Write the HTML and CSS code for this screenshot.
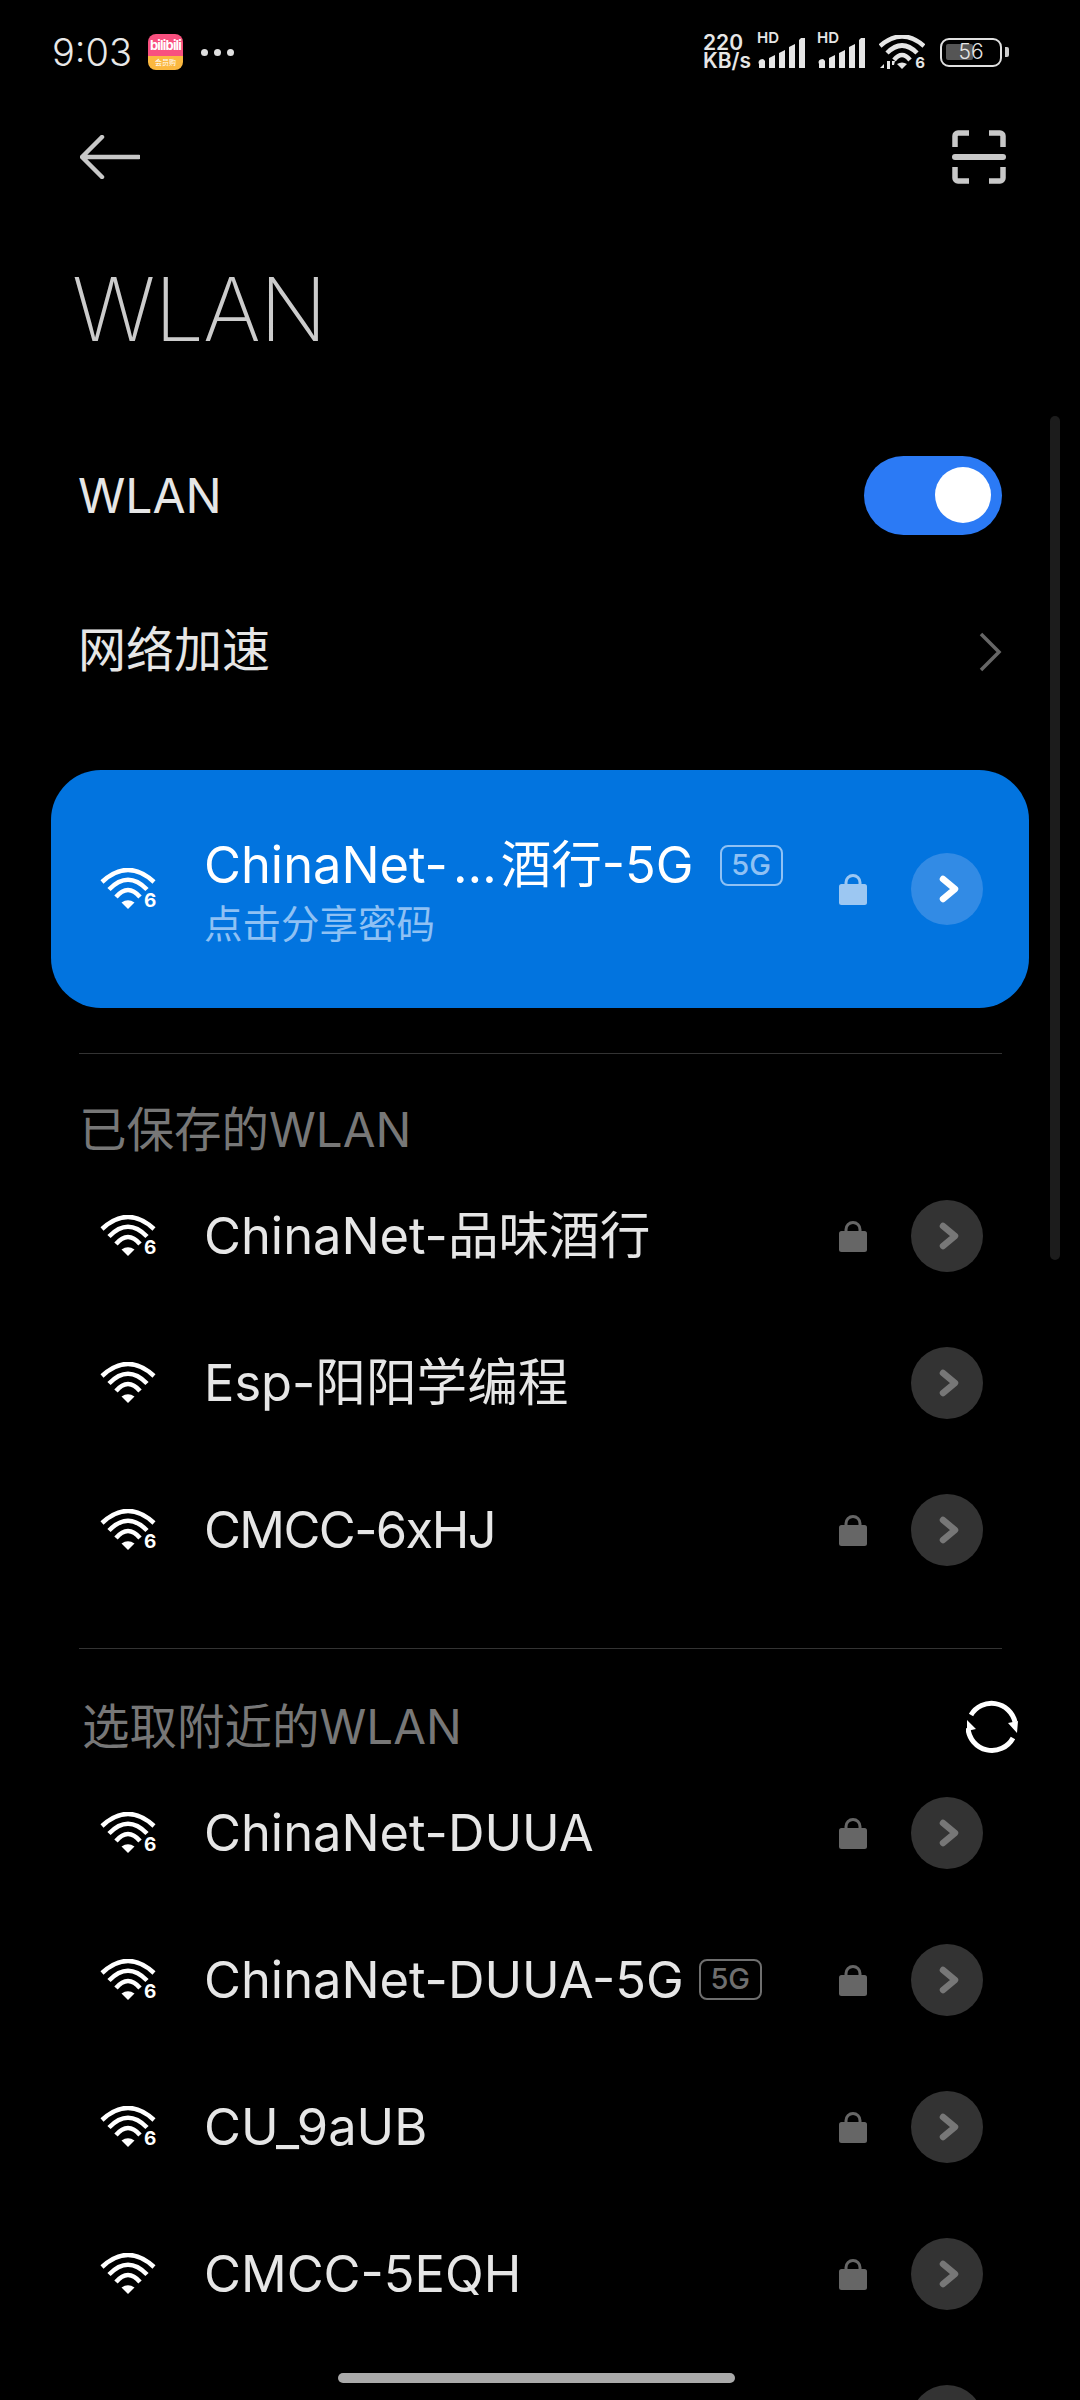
FILE: index.html
```html
<!DOCTYPE html>
<html lang="zh-CN">
<head>
    <meta charset="UTF-8">
    <meta name="viewport" content="width=device-width, initial-scale=1.0">
    <title>WLAN</title>
    <link rel="stylesheet" href="styles.css">
</head>
<body>
    <svg class="defs" width="0" height="0">
        <symbol id="wifi" viewBox="0 0 56 42">
            <path d="M2 14Q28 -10 54 14M9 21.500Q28 2 47 21.500M16 29Q28 15 40 29" fill="none" stroke="currentColor" stroke-width="4.500"/>
            <path d="M21.500 34.500Q28 30 34.500 34.500L28 41Z" fill="currentColor"/>
        </symbol>
        <symbol id="lock" viewBox="0 0 28 32">
            <path d="M7 13V9.500a7 7 0 0 1 14 0V13" fill="none" stroke="currentColor" stroke-width="3"/>
            <rect x="0" y="11" width="28" height="21" rx="2.500" fill="currentColor"/>
        </symbol>
        <symbol id="chev" viewBox="0 0 24 30">
            <path d="M6 5L18 15L6 25" fill="none" stroke="currentColor" stroke-width="6.500" stroke-linecap="round" stroke-linejoin="round"/>
        </symbol>
        <symbol id="signal" viewBox="0 0 50 36">
            <path d="M2 36v-4a3 3 0 0 1 6 -3v7zM12 36v-10l6 -3v13zM22 36v-15l6 -3v18zM32 36v-21l6 -3v24zM42 36v-28l2 -2h4v30z" fill="currentColor"/>
        </symbol>
    </svg>

    <div class="screen">
        <!-- 状态栏 -->
        <div class="status">
            <span class="time">9:03</span>
            <span class="appicon"><span class="apptop">bilibili</span><span class="appbottom">会员购</span></span>
            <span class="dots"><i></i><i></i><i></i></span>
            <span class="status-right">
                <span class="speed">220<br>KB/s</span>
                <span class="sig"><span class="hd">HD</span><svg class="bars"><use href="#signal"/></svg></span>
                <span class="sig sig-2"><span class="hd">HD</span><svg class="bars"><use href="#signal"/></svg></span>
                <span class="swifi">
                    <svg class="swifi-img" viewBox="0 0 46 35">
                        <path d="M1 11Q23 -8 45 11M8 18Q23 3 38 18M15 25Q23 15 31 25" fill="none" stroke="currentColor" stroke-width="4.500"/>
                        <path d="M18 29Q23 26 28 29L23 34Z" fill="currentColor"/>
                        <path d="M5 29l-4 4h4zM8 26h3v8h-3zM13 26h3l-1 4h-2z" fill="currentColor"/>
                    </svg>
                    <span class="six-s">6</span>
                </span>
                <span class="battery"><span class="batfill"></span><span class="batnum">56</span></span>
                <span class="battip"></span>
            </span>
        </div>

        <div class="topbar">
            <svg class="back" viewBox="0 0 60 44">
                <path d="M59 22H3M22 2L2 22L22 42" fill="none" stroke="currentColor" stroke-width="4.500" stroke-linecap="round" stroke-linejoin="round"/>
            </svg>
            <svg class="scan" viewBox="0 0 54 54">
                <path d="M17 3H6a3 3 0 0 0 -3 3V17M37 3H48a3 3 0 0 1 3 3V17M17 51H6a3 3 0 0 1 -3 -3V37M37 51H48a3 3 0 0 0 3 -3V37" fill="none" stroke="currentColor" stroke-width="5.500"/>
                <path d="M3 27H51" fill="none" stroke="currentColor" stroke-width="6" stroke-linecap="round"/>
            </svg>
        </div>

        <h1 class="title">WLAN</h1>

        <div class="setrow">
            <span>WLAN</span>
            <span class="toggle"><span class="knob"></span></span>
        </div>
        <div class="setrow setrow-2">
            <span class="cjk-up">网络加速</span>
            <svg class="more" viewBox="0 0 24 40">
                <path d="M3 2L21 20L3 38" fill="none" stroke="currentColor" stroke-width="3.500"/>
            </svg>
        </div>

        <!-- 当前连接 -->
        <div class="card">
            <span class="wifi"><svg class="wifi-img"><use href="#wifi"/></svg><span class="six">6</span></span>
            <div class="info">
                <div class="nameline"><span class="name">ChinaNet-<span class="ell">…</span>酒行-5G</span><span class="badge">5G</span></div>
                <div class="sub">点击分享密码</div>
            </div>
            <svg class="lock"><use href="#lock"/></svg>
            <span class="go"><svg class="chev"><use href="#chev"/></svg></span>
        </div>

        <div class="line"></div>
        <div class="sect">已保存的WLAN</div>
        <div class="row">
            <span class="wifi"><svg class="wifi-img"><use href="#wifi"/></svg><span class="six">6</span></span>
            <span class="name">ChinaNet-品味酒行</span>
            <svg class="lock"><use href="#lock"/></svg>
            <span class="go"><svg class="chev"><use href="#chev"/></svg></span>
        </div>
        <div class="row">
            <span class="wifi"><svg class="wifi-img"><use href="#wifi"/></svg></span>
            <span class="name">Esp-阳阳学编程</span>
            <span class="go"><svg class="chev"><use href="#chev"/></svg></span>
        </div>
        <div class="row">
            <span class="wifi"><svg class="wifi-img"><use href="#wifi"/></svg><span class="six">6</span></span>
            <span class="name name-tight">CMCC-6xHJ</span>
            <svg class="lock"><use href="#lock"/></svg>
            <span class="go"><svg class="chev"><use href="#chev"/></svg></span>
        </div>

        <div class="line"></div>
        <div class="sect sect-2">
            <span>选取附近的WLAN</span>
            <svg class="refresh" viewBox="0 0 54 54">
                <path d="M5 15A24 24 0 0 1 49 22M47 38A24 24 0 0 1 2 28" fill="none" stroke="currentColor" stroke-width="5"/>
                <path d="M1 20L10 29L1 31ZM42 23L52 21L51 33Z" fill="currentColor"/>
            </svg>
        </div>
        <div class="row">
            <span class="wifi"><svg class="wifi-img"><use href="#wifi"/></svg><span class="six">6</span></span>
            <span class="name">ChinaNet-DUUA</span>
            <svg class="lock"><use href="#lock"/></svg>
            <span class="go"><svg class="chev"><use href="#chev"/></svg></span>
        </div>
        <div class="row">
            <span class="wifi"><svg class="wifi-img"><use href="#wifi"/></svg><span class="six">6</span></span>
            <div class="nameline"><span class="name">ChinaNet-DUUA-5G</span><span class="badge">5G</span></div>
            <svg class="lock"><use href="#lock"/></svg>
            <span class="go"><svg class="chev"><use href="#chev"/></svg></span>
        </div>
        <div class="row">
            <span class="wifi"><svg class="wifi-img"><use href="#wifi"/></svg><span class="six">6</span></span>
            <span class="name">CU_9aUB</span>
            <svg class="lock"><use href="#lock"/></svg>
            <span class="go"><svg class="chev"><use href="#chev"/></svg></span>
        </div>
        <div class="row">
            <span class="wifi"><svg class="wifi-img"><use href="#wifi"/></svg></span>
            <span class="name">CMCC-5EQH</span>
            <svg class="lock"><use href="#lock"/></svg>
            <span class="go"><svg class="chev"><use href="#chev"/></svg></span>
        </div>
        <div class="row">
            <span class="name"></span>
            <span class="go"></span>
        </div>

        <div class="scrollbar"></div>
        <div class="homebar"></div>
    </div>
</body>
</html>
```

FILE: styles.css
```css
body {
    margin: 0;
    background-color: #000;
    font-family: "Inter", "Noto Sans CJK SC", sans-serif;
    color: #e6e6e6;
}

.defs {
    position: absolute;
}

.screen {
    position: relative;
    width: 1080px;
    height: 2400px;
    overflow: hidden;
    background-color: #000;
}

/* status bar */
.status {
    display: flex;
    align-items: center;
    height: 104px;
    padding: 0 71px 0 52px;
    box-sizing: border-box;
}

.time {
    font-size: 38px;
    font-weight: 300;
    color: #e8e8e8;
    width: 71px;
}

.appicon {
    display: flex;
    flex-direction: column;
    width: 35px;
    height: 36px;
    margin-left: 25px;
    border-radius: 8px;
    overflow: hidden;
}

.apptop {
    height: 22px;
    background-color: #f8507f;
    color: #fff;
    font-size: 13px;
    font-weight: 700;
    line-height: 23px;
    text-align: center;
    letter-spacing: -0.8px;
    overflow: hidden;
}

.appbottom {
    flex: 1;
    background-color: #fbb840;
    color: #fff;
    font-size: 7px;
    line-height: 14px;
    text-align: center;
    overflow: hidden;
}

.dots {
    display: flex;
    gap: 6px;
    margin-left: 18px;
}

.dots i {
    width: 7px;
    height: 7px;
    border-radius: 50%;
    background-color: #e0e0e0;
}

.status-right {
    display: flex;
    align-items: center;
    margin-left: auto;
    color: #e6e6e6;
}

.speed {
    width: 52px;
    font-size: 21px;
    font-weight: 600;
    line-height: 18px;
}

.sig {
    position: relative;
    display: block;
    width: 50px;
    height: 36px;
    margin-left: 2px;
    margin-right: 8px;
    margin-top: -4px;
}

.sig-2 {
    margin-right: 12px;
}

.bars {
    display: block;
    width: 50px;
    height: 36px;
}

.hd {
    position: absolute;
    left: 0;
    top: -3px;
    font-size: 15px;
    font-weight: 600;
    line-height: 18px;
}

.swifi {
    position: relative;
    display: block;
    width: 46px;
    height: 35px;
    margin-right: 15px;
}

.swifi-img {
    display: block;
    width: 46px;
    height: 35px;
}

.six-s {
    position: absolute;
    right: 0;
    bottom: 0;
    font-size: 15px;
    font-weight: 700;
    line-height: 15px;
}

.battery {
    position: relative;
    display: block;
    width: 62px;
    height: 29px;
    box-sizing: border-box;
    border: 2.500px solid #e0e0e0;
    border-radius: 9px;
}

.batfill {
    position: absolute;
    left: 4px;
    top: 4px;
    width: 27px;
    height: 16px;
    background-color: #555;
    border-radius: 2px;
}

.batnum {
    position: absolute;
    left: 0;
    right: 0;
    top: 0;
    font-size: 21px;
    font-weight: 300;
    line-height: 24px;
    text-align: center;
}

.battip {
    width: 4px;
    height: 10px;
    margin-left: 3px;
    background-color: #ccc;
    border-radius: 0 2px 2px 0;
}

/* title bar */
.topbar {
    display: flex;
    align-items: center;
    justify-content: space-between;
    height: 106px;
    padding: 0 74px 0 80px;
    color: #c8c8c8;
}

.back {
    width: 60px;
    height: 44px;
}

.scan {
    width: 54px;
    height: 54px;
}

.title {
    margin: 0;
    height: 211px;
    padding-left: 72px;
    padding-top: 44px;
    box-sizing: border-box;
    font-size: 88px;
    font-weight: 200;
    line-height: 110px;
    color: #ccc;
    letter-spacing: -1px;
}

.setrow {
    display: flex;
    align-items: center;
    justify-content: space-between;
    height: 148px;
    padding: 0 78px;
    font-size: 48px;
}

.setrow-2 {
    margin-top: 9px;
}

.cjk-up {
    margin-top: -12px;
}

.toggle {
    display: flex;
    align-items: center;
    justify-content: flex-end;
    width: 138px;
    height: 79px;
    padding-right: 11px;
    box-sizing: border-box;
    background-color: #2b7af5;
    border-radius: 40px;
}

.knob {
    width: 56px;
    height: 56px;
    background-color: #fff;
    border-radius: 50%;
}

.more {
    width: 24px;
    height: 40px;
    color: #666;
}

/* network rows */
.card,
.row {
    display: flex;
    align-items: center;
    padding: 0 97px 0 100px;
}

.card {
    width: 978px;
    height: 238px;
    margin: 44px 0 0 51px;
    padding: 0 46px 0 49px;
    box-sizing: border-box;
    background-color: #0274df;
    border-radius: 50px;
    color: #fff;
}

.row {
    height: 147px;
}

.wifi {
    position: relative;
    display: block;
    flex: none;
    width: 56px;
    height: 42px;
    margin-right: 48px;
    color: #fff;
}

.wifi-img {
    display: block;
    width: 56px;
    height: 42px;
}

.six {
    position: absolute;
    left: 44px;
    bottom: 0;
    font-size: 19px;
    font-weight: 700;
    line-height: 19px;
}

.info {
    flex: 1;
    margin-top: 2px;
}

.nameline {
    display: flex;
    align-items: center;
    flex: 1;
}

.name {
    flex: none;
    font-size: 50.600px;
    line-height: 64px;
    white-space: nowrap;
}

.row > .name {
    flex: 1;
}

.name-tight {
    letter-spacing: -1.600px;
}

.ell {
    padding: 0 4px 0 5px;
}

.sub {
    margin-top: 4px;
    font-size: 38.500px;
    line-height: 46px;
    color: #8fc1f4;
}

.badge {
    display: block;
    margin-left: 15px;
    width: 63px;
    height: 41px;
    box-sizing: border-box;
    border: 2.500px solid #6f6f6f;
    border-radius: 8px;
    font-size: 29px;
    font-weight: 500;
    line-height: 36px;
    text-align: center;
    color: #6f6f6f;
}

.card .badge {
    margin-left: 26px;
    border-color: #8fc1f4;
    color: #8fc1f4;
}

.lock {
    flex: none;
    width: 28px;
    height: 32px;
    margin-right: 44px;
    color: #666;
}

.card .lock {
    color: #9cc7f2;
}

.go {
    display: flex;
    align-items: center;
    justify-content: center;
    flex: none;
    width: 72px;
    height: 72px;
    border-radius: 50%;
    background-color: #333;
    color: #777;
}

.card .go {
    background-color: #328be5;
    color: #fff;
}

.chev {
    width: 24px;
    height: 30px;
    margin-left: 3px;
}

.line {
    height: 1px;
    margin: 45px 78px 0 79px;
    background-color: #333;
}

.sect {
    padding: 44px 0 0 79px;
    font-size: 47.500px;
    line-height: 64px;
    color: #777;
}

.sect-2 {
    display: flex;
    align-items: center;
    justify-content: space-between;
    height: 64px;
    padding: 46px 60px 0 82px;
}

.refresh {
    width: 54px;
    height: 54px;
    color: #fff;
}

/* overlays */
.scrollbar {
    position: absolute;
    left: 1050px;
    top: 416px;
    width: 10px;
    height: 844px;
    border-radius: 5px;
    background-color: #1c1c1c;
}

.homebar {
    position: absolute;
    left: 338px;
    top: 2373px;
    width: 397px;
    height: 10px;
    border-radius: 5px;
    background-color: #aaa;
}
```
